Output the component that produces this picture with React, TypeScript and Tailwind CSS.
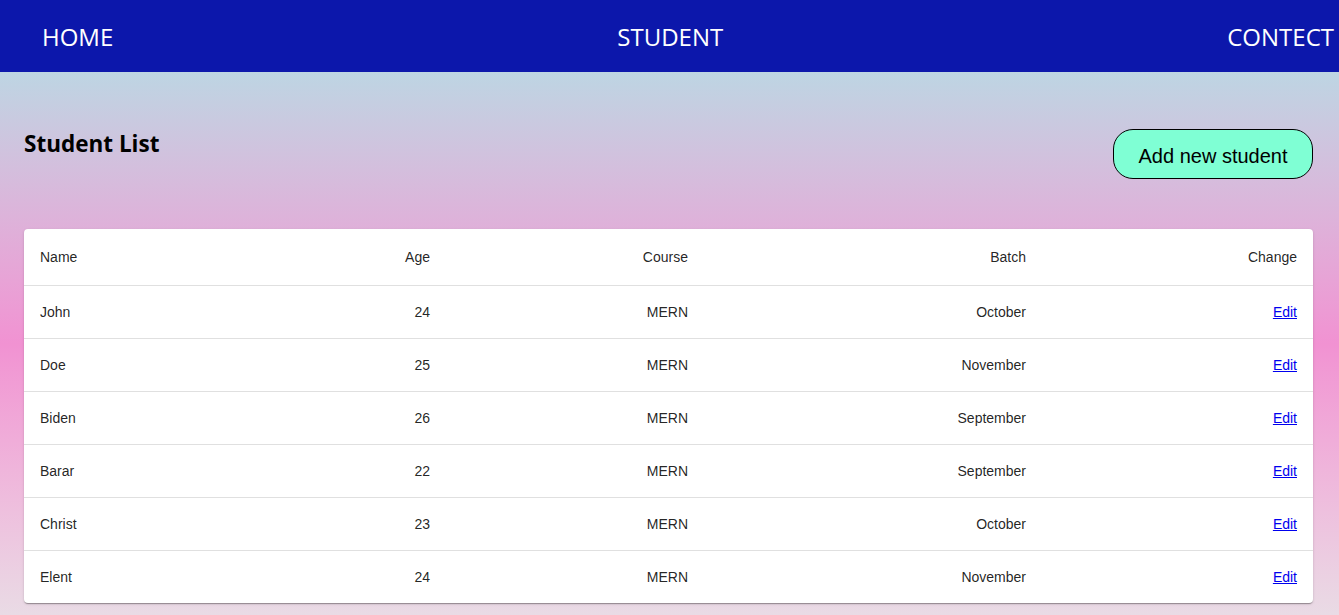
import React from "react";

type Student = {
	name: string;
	age: number;
	course: string;
	batch: string;
};

const students: Student[] = [
	{ name: "John", age: 24, course: "MERN", batch: "October" },
	{ name: "Doe", age: 25, course: "MERN", batch: "November" },
	{ name: "Biden", age: 26, course: "MERN", batch: "September" },
	{ name: "Barar", age: 22, course: "MERN", batch: "September" },
	{ name: "Christ", age: 23, course: "MERN", batch: "October" },
	{ name: "Elent", age: 24, course: "MERN", batch: "November" },
];

function Navbar() {
	return (
		<nav className="flex h-[72px] items-center justify-between bg-[#0c17ab] pl-[42px] pr-[5px] pt-[2px] font-['Open_Sans',sans-serif] text-[24px] leading-[32px] text-white">
			<a href="#">HOME</a>
			<a href="#">STUDENT</a>
			<a href="#">CONTECT</a>
		</nav>
	);
}

function StudentTable() {
	return (
		<div className="overflow-hidden rounded-[4px] bg-white shadow-[0_2px_1px_-1px_rgba(0,0,0,0.2),0_1px_1px_0_rgba(0,0,0,0.14),0_1px_3px_0_rgba(0,0,0,0.12)]">
			<table className="w-full table-fixed border-collapse font-['Liberation_Sans',Arial,sans-serif] text-[14px] text-[rgba(0,0,0,0.87)]">
				<colgroup>
					<col className="w-[211px]" />
					<col className="w-[211px]" />
					<col className="w-[258px]" />
					<col className="w-[338px]" />
					<col className="w-[271px]" />
				</colgroup>
				<thead>
					<tr className="h-[56px] border-b border-[#e0e0e0]">
						<th className="px-4 pt-[2px] text-left font-normal">Name</th>
						<th className="px-4 pt-[2px] text-right font-normal">Age</th>
						<th className="px-4 pt-[2px] text-right font-normal">Course</th>
						<th className="px-4 pt-[2px] text-right font-normal">Batch</th>
						<th className="px-4 pt-[2px] text-right font-normal">Change</th>
					</tr>
				</thead>
				<tbody>
					{students.map((s, i) => (
						<tr
							key={s.name}
							className={
								i === students.length - 1
									? "h-[53px]"
									: "h-[53px] border-b border-[#e0e0e0]"
							}
						>
							<td className="px-4 pt-[2px] text-left">{s.name}</td>
							<td className="px-4 pt-[2px] text-right">{s.age}</td>
							<td className="px-4 pt-[2px] text-right">{s.course}</td>
							<td className="px-4 pt-[2px] text-right">{s.batch}</td>
							<td className="px-4 pt-[2px] text-right">
								<a href="#" className="text-[#0000ee] underline">
									Edit
								</a>
							</td>
						</tr>
					))}
				</tbody>
			</table>
		</div>
	);
}

export default function App() {
	return (
		<div className="min-h-screen">
			<Navbar />
			<main className="min-h-[543px] bg-gradient-to-b from-[#bdd5e3] via-[#f192d2] to-[#e9dbe5] pl-6 pr-[26px] pt-[57px] pb-3">
				<div className="flex items-start justify-between">
					<h2 className="font-['Open_Sans',sans-serif] text-[22.5px] font-bold leading-[30px] text-black">
						Student List
					</h2>
					<button
						type="button"
						className="h-[50px] w-[200px] rounded-[20px] border border-black bg-[#7fffd4] pt-[3px] font-['Liberation_Sans',Arial,sans-serif] text-[20px] text-black"
					>
						Add new student
					</button>
				</div>
				<div className="mt-[50px]">
					<StudentTable />
				</div>
			</main>
		</div>
	);
}
